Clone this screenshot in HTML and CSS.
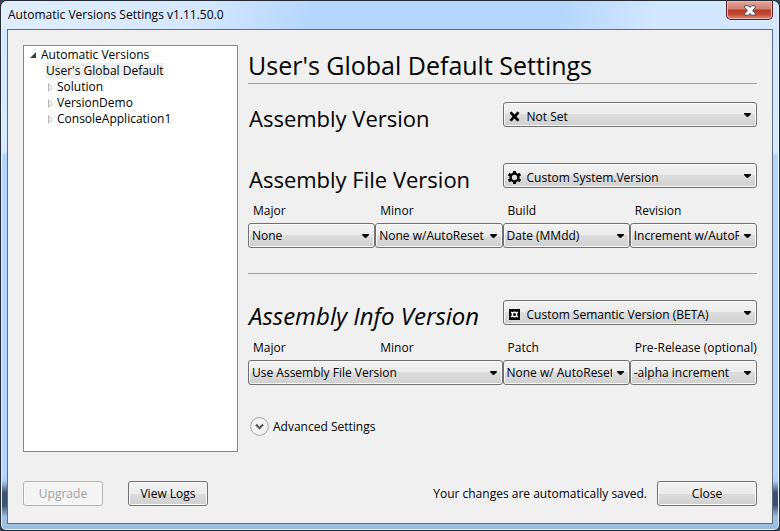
FILE: index.html
```html
<!DOCTYPE html>
<html lang="en">
<head>
<meta charset="utf-8">
<title>Automatic Versions Settings</title>
<link rel="stylesheet" href="styles.css">
</head>
<body>
<svg width="0" height="0" class="sprite" aria-hidden="true">
  <symbol id="arrow" viewBox="0 0 7 4"><path d="M0 0h7v1L4 4H3L0 1z"/></symbol>
  <symbol id="expander" viewBox="0 0 5 9"><path d="M.5.8v7.400L4.300 4.500z" fill="#fff" stroke="#b4b4b4"/></symbol>
</svg>
<div class="window">
  <header class="titlebar">
    <span class="caption">Automatic Versions Settings v1.11.50.0</span>
    <button class="window-close" type="button" aria-label="Close window">
      <svg width="12" height="11" viewBox="0 0 12 11"><path d="M.8.8h3.900L6 2.500 7.300.8h3.900v1.700L8.700 5.500l2.500 3v1.700H7.300L6 8.500l-1.300 1.700H.8V8.500l2.500-3-2.500-3z" fill="#fff" stroke="#4a5064"/></svg>
    </button>
  </header>
  <div class="client">
    <div class="panes">
      <nav class="tree" aria-label="Projects">
        <ul>
          <li class="root"><svg width="6" height="6" viewBox="0 0 6 6"><path d="M6 0v6H0z" fill="#404040"/></svg><span>Automatic Versions</span></li>
          <li class="leaf"><span class="selected">User's Global Default</span></li>
          <li class="child"><svg width="5" height="9"><use href="#expander"/></svg><span>Solution</span></li>
          <li class="child"><svg width="5" height="9"><use href="#expander"/></svg><span>VersionDemo</span></li>
          <li class="child"><svg width="5" height="9"><use href="#expander"/></svg><span>ConsoleApplication1</span></li>
        </ul>
      </nav>
      <main class="settings">
        <h1>User's Global Default Settings</h1>
        <section class="group assembly">
          <div class="group-head">
            <h2><label for="av">Assembly Version</label></h2>
            <div class="combo with-icon">
              <select id="av"><option>Not Set</option></select>
              <svg class="kind" width="13" height="13" viewBox="0 0 13 13"><path d="M1.500 3 3.500 1.500 6.500 4.500 9.500 1.500l2 1.500-3 3.500 3 3.500-2 1.500-3-3-3 3-2-1.500 3-3.500z"/></svg>
              <svg class="arrow" width="7" height="4"><use href="#arrow"/></svg>
            </div>
          </div>
        </section>
        <section class="group file">
          <div class="group-head">
            <h2><label for="afv">Assembly File Version</label></h2>
            <div class="combo with-icon">
              <select id="afv"><option>Custom System.Version</option></select>
              <svg class="kind" width="13" height="13" viewBox="0 0 13 13"><circle cx="6.500" cy="6.500" r="3.900" fill="none" stroke="#000" stroke-width="2.400"/><path d="M6.500 0v2.500M6.500 10.500V13M.6 3.100 3 4.500M10 8.500l2.400 1.400M.6 9.900 3 8.500M10 4.500l2.400-1.400" stroke="#000" stroke-width="3"/></svg>
              <svg class="arrow" width="7" height="4"><use href="#arrow"/></svg>
            </div>
          </div>
          <div class="parts">
            <div class="part"><label for="f1">Major</label><div class="combo"><select id="f1"><option>None</option></select><svg class="arrow" width="7" height="4"><use href="#arrow"/></svg></div></div>
            <div class="part"><label for="f2">Minor</label><div class="combo"><select id="f2"><option>None w/AutoReset</option></select><svg class="arrow" width="7" height="4"><use href="#arrow"/></svg></div></div>
            <div class="part"><label for="f3">Build</label><div class="combo"><select id="f3"><option>Date (MMdd)</option></select><svg class="arrow" width="7" height="4"><use href="#arrow"/></svg></div></div>
            <div class="part"><label for="f4">Revision</label><div class="combo"><select id="f4"><option>Increment w/AutoReset</option></select><svg class="arrow" width="7" height="4"><use href="#arrow"/></svg></div></div>
          </div>
        </section>
        <section class="group info">
          <div class="group-head">
            <h2 class="italic"><label for="aiv">Assembly Info Version</label></h2>
            <div class="combo with-icon">
              <select id="aiv"><option>Custom Semantic Version (BETA)</option></select>
              <svg class="kind" width="13" height="13" viewBox="0 0 13 13"><path d="M1 1h11v11H1z"/><circle cx="6.500" cy="6.500" r="2.200" fill="none" stroke="#fff" stroke-width="1.400"/><path d="M3 4l1.500 1M10 4 8.500 5M3 9l1.500-1M10 9 8.500 8" stroke="#fff" stroke-width="1.400"/></svg>
              <svg class="arrow" width="7" height="4"><use href="#arrow"/></svg>
            </div>
          </div>
          <div class="parts">
            <div class="part wide"><div class="pair"><label for="i1">Major</label><label for="i1">Minor</label></div><div class="combo"><select id="i1"><option>Use Assembly File Version</option></select><svg class="arrow" width="7" height="4"><use href="#arrow"/></svg></div></div>
            <div class="part"><label for="i3">Patch</label><div class="combo"><select id="i3"><option>None w/ AutoReset</option></select><svg class="arrow" width="7" height="4"><use href="#arrow"/></svg></div></div>
            <div class="part"><label for="i4">Pre-Release (optional)</label><div class="combo"><select id="i4"><option>-alpha increment</option></select><svg class="arrow" width="7" height="4"><use href="#arrow"/></svg></div></div>
          </div>
        </section>
        <button class="advanced" type="button" aria-expanded="false">
          <svg width="19" height="19" viewBox="0 0 19 19"><circle cx="9.500" cy="9.500" r="8.900" fill="#f2f2f2" stroke="#a6a6a6"/><path d="M6 7.500l3.500 3.700L13 7.500" fill="none" stroke="#555" stroke-width="2"/></svg>
          <span>Advanced Settings</span>
        </button>
      </main>
    </div>
    <footer class="actions">
      <button class="btn" type="button" disabled>Upgrade</button>
      <button class="btn" type="button">View Logs</button>
      <span class="note">Your changes are automatically saved.</span>
      <button class="btn close" type="button">Close</button>
    </footer>
  </div>
</div>
</body>
</html>
```
FILE: styles.css
```css
* { box-sizing: border-box; }
body {
  margin: 0;
  background: #39424e;
  color: #000;
  font: 12px/16px "Open Sans", "Noto Sans", sans-serif;
}
button, select { font: inherit; color: inherit; }
.sprite { position: absolute; }
.window {
  display: flex;
  flex-direction: column;
  min-height: 100vh;
  padding: 0 6px 6px;
  border: 1px solid #222a33;
  border-radius: 7px 7px 6px 6px;
  box-shadow: inset 0 0 0 1px #e8f3ff;
  background:
    linear-gradient(transparent 480px, #3c5070 492px, #3c5070 504px, transparent 516px) left / 6px 100% no-repeat,
    linear-gradient(transparent 480px, #3c5070 492px, #3c5070 504px, transparent 516px) right / 6px 100% no-repeat,
    linear-gradient(#d2e6ff 0, #d8eaff 150px, #b4d5fc 155px, #b4d5fc 470px, #98bbe0 100%);
}
.titlebar {
  display: flex;
  justify-content: space-between;
  align-items: flex-start;
  height: 28px;
  margin: 0 -5px;
  padding: 0 5px 0 6px;
  background: linear-gradient(105deg, #e0efff 0, #d5e8ff 25%, #b5d7fd 40%, #b5d7fd 72%, #d3e7ff 84%, #d3e7ff 100%);
  border-radius: 6px 6px 0 0;
}
.caption { padding-top: 6px; }
.window-close {
  display: grid;
  place-items: center;
  width: 47px;
  height: 19px;
  padding: 0;
  border: 1px solid #5c2029;
  border-top: 0;
  border-radius: 0 0 5px 5px;
  box-shadow: inset 0 0 0 1px #eab6ac;
  background: linear-gradient(#e5a79b, #d27e6e 45%, #b43b26 50%, #c34c35 75%, #dc8f75);
}
.client {
  flex: 1;
  display: flex;
  flex-direction: column;
  padding: 15px 15px 17px 15px;
  border: 1px solid #5d6d7e;
  background: #f0f0f0;
}
.panes {
  flex: 1;
  display: grid;
  grid-template-columns: 215px minmax(0, 1fr);
  gap: 10px;
}
.tree { border: 1px solid #828790; background: #fff; }
.tree ul { margin: 0; padding: 1px 0 0 6px; list-style: none; }
.tree li { display: flex; align-items: center; gap: 4px; height: 16px; }
.tree .root { gap: 5px; }
.tree .leaf { padding-left: 16px; }
.tree .child { padding-left: 18px; }
.selected { background: #f0f0f0; }
h1, h2 { margin: 0; font-weight: 400; }
h1 {
  height: 39px;
  border-bottom: 1px solid #a0a0a0;
  font-size: 25px;
  line-height: 40px;
}
.group-head { display: grid; grid-template-columns: repeat(2, minmax(0, 1fr)); }
h2 { height: 25px; padding-left: 1px; font-size: 22px; line-height: 32px; white-space: nowrap; }
.italic { font-size: 24px; font-style: italic; }
.assembly { padding-top: 18px; }
.file { padding: 36px 0 25px; border-bottom: 1px solid #a0a0a0; }
.info { padding-top: 26px; }
.parts {
  display: grid;
  grid-template-columns: repeat(4, minmax(0, 1fr));
  padding-top: 15px;
}
.wide { grid-column: span 2; }
.part label { display: block; padding-left: 5px; margin-bottom: 4px; white-space: nowrap; }
.pair { display: grid; grid-template-columns: 1fr 1fr; }
.combo { position: relative; }
select {
  appearance: none;
  display: block;
  width: 100%;
  height: 25px;
  padding: 0 17px 0 3px;
  overflow: hidden;
}
.with-icon select { padding: 4px 17px 0 23px; }
select, .btn {
  border: 1px solid #707070;
  border-radius: 3px;
  box-shadow: inset 0 0 0 1px #fafafa;
  background: linear-gradient(#f2f2f2, #ebebeb 50%, #dddddd 50%, #cfcfcf);
}
.arrow { position: absolute; top: 11px; right: 6px; pointer-events: none; }
.kind { position: absolute; top: 8px; left: 5px; pointer-events: none; }
.advanced {
  display: flex;
  align-items: center;
  gap: 4px;
  margin-top: 32px;
  padding: 0 0 0 2px;
  border: 0;
  background: none;
}
.actions { display: flex; align-items: center; gap: 25px; margin-top: 29px; }
.btn { min-width: 80px; height: 25px; padding: 0 8px; }
.btn:disabled { border-color: #adb2b5; color: #a0a0a0; background: #f4f4f4; }
.note { margin-left: auto; }
.close { width: 100px; margin-left: -15px; }
```
